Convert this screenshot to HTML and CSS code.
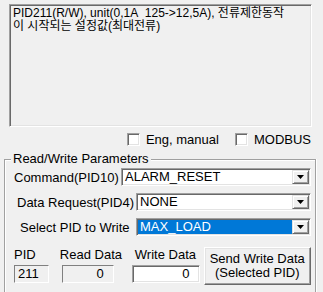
FILE: index.html
```html
<!DOCTYPE html>
<html lang="ko">
<head>
  <meta charset="UTF-8" />
  <title>PID Parameters</title>
  <link rel="stylesheet" href="styles.css">
</head>
<body>
  <div class="memo">PID211(R/W), unit(0,1A&nbsp; 125-&gt;12,5A), 전류제한동작<br>이 시작되는 설정값(최대전류)</div>

  <div class="checks">
    <label class="check"><span class="box"></span>Eng, manual</label>
    <label class="check"><span class="box"></span>MODBUS</label>
  </div>

  <fieldset class="group">
    <legend>Read/Write Parameters</legend>

    <div class="row row-cmd">
      <span class="lbl">Command(PID10)</span>
      <div class="combo wide">
        <span class="combo-text">ALARM_RESET</span>
        <span class="combo-btn"><svg width="7" height="4"><path d="M0 0h7L3.5 4z"/></svg></span>
      </div>
    </div>

    <div class="row row-req">
      <span class="lbl">Data Request(PID4)</span>
      <div class="combo">
        <span class="combo-text">NONE</span>
        <span class="combo-btn"><svg width="7" height="4"><path d="M0 0h7L3.5 4z"/></svg></span>
      </div>
    </div>

    <div class="row row-sel">
      <span class="lbl">Select PID to Write</span>
      <div class="combo">
        <span class="combo-text selected">MAX_LOAD</span>
        <span class="combo-btn"><svg width="7" height="4"><path d="M0 0h7L3.5 4z"/></svg></span>
      </div>
    </div>

    <div class="bottom">
      <div class="cell cell-pid">
        <span class="cell-lbl">PID</span>
        <div class="static">211</div>
      </div>
      <div class="cell cell-read">
        <span class="cell-lbl">Read Data</span>
        <div class="static num">0</div>
      </div>
      <div class="cell cell-write">
        <span class="cell-lbl">Write Data</span>
        <div class="edit num">0</div>
      </div>
      <button class="send">Send Write Data<br>(Selected PID)</button>
    </div>
  </fieldset>
</body>
</html>
```

FILE: styles.css
```css
html, body {
  margin: 0; padding: 0;
  width: 323px;
  height: 292px;
  overflow: hidden;
  background: #f0f0f0;
  font-family: "Liberation Sans", "Noto Sans CJK KR", sans-serif;
  font-size: 13px;
  color: black;
}
.memo {
  margin: 4px 11px 0 9px;
  height: 123px;
  box-sizing: border-box;
  padding: 2px 3px 1px;
  font-size: 12px;
  line-height: 13px;
  border: 1px solid;
  border-color: #a0a0a0 #fff #fff #a0a0a0;
  box-shadow: inset 1px 1px 0 #696969, inset -1px -1px 0 #e3e3e3;
}
.checks {
  display: flex;
  justify-content: flex-end;
  gap: 16px;
  margin: 6px 12px 0 0;
  height: 13px;
  line-height: 13px;
}
.check {
  display: flex;
  align-items: center;
  gap: 6px;
}
.box {
  width: 13px;
  height: 13px;
  box-sizing: border-box;
  background: white;
  border: 1px solid;
  border-color: #a0a0a0 #fff #fff #a0a0a0;
  box-shadow: inset 1px 1px 0 #696969, inset -1px -1px 0 #e3e3e3;
}
.group {
  margin: 6px 7px 0 4px;
  padding: 0 4px 8px 6px;
  border: 1px solid #a0a0a0;
  border-bottom: none;
  box-shadow: inset 1px 1px 0 #fff, 1px 0 0 #fff;
  min-width: 0;
}
.group legend {
  padding: 0 2px;
  line-height: 14px;
  background: #f0f0f0;
}
.row {
  display: flex;
  align-items: center;
  height: 18px;
}
.row-cmd { margin-top: 2px; }
.row-req { margin-top: 7px; }
.row-sel { margin-top: 7px; }
.row-cmd .lbl { margin-left: 3px; }
.row-req .lbl { margin-left: 6px; }
.row-sel .lbl { margin-left: 9px; }

.combo {
  display: flex;
  margin-left: auto;
  width: 175px;
  height: 18px;
  box-sizing: border-box;
  padding: 1px;
  background: white;
  border: 1px solid;
  border-color: #a0a0a0 #fff #fff #a0a0a0;
  box-shadow: inset 1px 1px 0 #696969, inset -1px -1px 0 #e3e3e3;
}
.combo.wide { width: 190px; }
.combo-text {
  flex: 1;
  padding-left: 2px;
  line-height: 14px;
  white-space: nowrap;
}
.combo-text.selected {
  background: #0078d7;
  color: white;
}
.combo-btn {
  width: 17px;
  display: flex;
  align-items: center;
  justify-content: center;
  box-sizing: border-box;
  background: #f0f0f0;
  border: 1px solid;
  border-color: #e3e3e3 #696969 #696969 #e3e3e3;
  box-shadow: inset 1px 1px 0 #fff, inset -1px -1px 0 #a0a0a0;
}
.combo-btn svg { display: block; }

.bottom {
  display: flex;
  align-items: flex-start;
  margin: 11px 0 0 3px;
}
.cell {
  display: flex;
  flex-direction: column;
}
.cell-lbl {
  line-height: 15px;
  white-space: nowrap;
}
.cell-pid { width: 35px; }
.cell-read { width: 52px; margin-left: 13px; }
.cell-read .cell-lbl { margin-left: -2px; }
.cell-write { width: 68px; margin-left: 18px; }
.cell-write .cell-lbl { margin-left: 3px; }
.static, .edit {
  margin-top: 3px;
  height: 18px;
  box-sizing: border-box;
  line-height: 16px;
  padding: 0 3px;
  border: 1px solid;
  border-color: #808080 #fff #fff #808080;
}
.num {
  text-align: right;
  padding-right: 9px;
}
.edit {
  background: white;
  border-color: #a0a0a0 #fff #fff #a0a0a0;
  box-shadow: inset 1px 1px 0 #696969, inset -1px -1px 0 #e3e3e3;
}
.send {
  margin-left: 4px;
  width: 108px;
  height: 38px;
  padding: 0;
  font: inherit;
  line-height: 14px;
  color: black;
  background: #f0f0f0;
  border: 1px solid;
  border-color: #fff #696969 #696969 #fff;
  box-shadow: inset -1px -1px 0 #a0a0a0, inset 1px 1px 0 #e3e3e3;
}
```
